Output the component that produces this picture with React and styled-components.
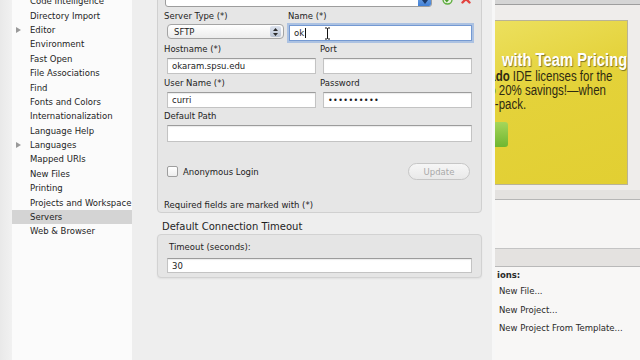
import React from "react";
import styled, { createGlobalStyle } from "styled-components";

const GlobalStyle = createGlobalStyle`
  html, body { margin: 0; padding: 0; }
  body {
    width: 640px;
    height: 360px;
    overflow: hidden;
    background: #eeeeee;
    font-family: "DejaVu Sans", "Liberation Sans", sans-serif;
    color: #222;
  }
`;

const Screen = styled.div`
  display: flex;
  width: 640px;
  height: 360px;
  overflow: hidden;
`;

/* ---------- preferences window ---------- */

const PrefsWindow = styled.div`
  display: flex;
  flex: none;
  width: 495px;
  height: 360px;
  background: #eeeeee;
  border-right: 3px solid #f7f7f7;
  box-sizing: border-box;
`;

const EdgeStrip = styled.div`
  flex: none;
  width: 12px;
  background: linear-gradient(to right, #e9e9e9, #f1f1f1);
`;

const Sidebar = styled.div`
  flex: none;
  width: 120px;
  background: #fbfbfb;
  overflow: hidden;
`;

const CategoryList = styled.ul`
  list-style: none;
  margin: -6px 0 0;
  padding: 0;
`;

const Category = styled.li`
  display: flex;
  align-items: center;
  height: 14.4px;
  font-size: 8.5px;
  color: #1e1e1e;
  background: ${({ $selected }) => ($selected ? "#d4d4d4" : "transparent")};
  white-space: nowrap;
`;

const Toggle = styled.span`
  flex: none;
  width: 18px;
  display: flex;
  align-items: center;
  padding-left: 4px;
  box-sizing: border-box;
  &::before {
    content: "";
    display: ${({ $open }) => ($open ? "block" : "none")};
    border-left: 5px solid #9a9a9a;
    border-top: 3.5px solid transparent;
    border-bottom: 3.5px solid transparent;
  }
`;

const Pane = styled.div`
  flex: 1;
  display: flex;
  flex-direction: column;
  padding-left: 25px;
  overflow: hidden;
`;

const GroupBox = styled.div`
  width: 325px;
  box-sizing: border-box;
  margin-top: -20px;
  padding: 10px 9px 1px 6px;
  background: #e6e6e6;
  border: 1px solid #d0d0d0;
  border-radius: 4px;
  display: flex;
  flex-direction: column;
`;

const TopRow = styled.div`
  display: flex;
  align-items: center;
  height: 16px;
`;

const Combo = styled.div`
  display: flex;
  align-items: stretch;
  width: 267px;
  height: 16px;
  margin-left: 1px;
  box-sizing: border-box;
  background: #fff;
  border: 1px solid #9d9d9d;
  border-radius: 3px;
  overflow: hidden;
`;

const ComboText = styled.span`
  flex: 1;
  padding-left: 6px;
  font-size: 8.5px;
  line-height: 8px;
`;

const ComboArrow = styled.span`
  flex: none;
  width: 13px;
  display: flex;
  align-items: flex-end;
  justify-content: center;
  padding-bottom: 2px;
  background: linear-gradient(#8db6ea, #3f7fd6);
`;

const IconSlot = styled.span`
  display: flex;
  margin-left: ${({ $gap }) => $gap}px;
`;

const Row = styled.div`
  display: flex;
  margin-top: ${({ $top }) => $top}px;
`;

const Cell = styled.div`
  display: flex;
  flex-direction: column;
  width: ${({ $w }) => $w}px;
  flex: none;
`;

const Label = styled.label`
  height: 12px;
  line-height: 12px;
  font-size: 8.5px;
  color: #242424;
  white-space: nowrap;
  margin-left: ${({ $indent }) => $indent || 0}px;
`;

const Input = styled.div`
  display: flex;
  align-items: center;
  position: relative;
  width: ${({ $w }) => $w}px;
  height: ${({ $h }) => $h || 16}px;
  margin-top: ${({ $top }) => ($top === undefined ? 3 : $top)}px;
  margin-left: ${({ $indent }) => ($indent === undefined ? 3 : $indent)}px;
  box-sizing: border-box;
  padding-left: 4px;
  background: #fff;
  border: 1px solid ${({ $focus }) => ($focus ? "#7499d2" : "#c3c3c3")};
  border-top-color: ${({ $focus }) => ($focus ? "#7499d2" : "#9c9c9c")};
  box-shadow: ${({ $focus }) =>
    $focus ? "0 0 0 2px rgba(124,164,222,0.55)" : "inset 0 1px 1px rgba(0,0,0,0.08)"};
  font-size: 8.5px;
  color: #1c1c1c;
`;

const Caret = styled.span`
  width: 1px;
  height: 10px;
  background: #111;
  margin-left: 1px;
`;

const Dots = styled.span`
  font-size: 8px;
  letter-spacing: 0.4px;
`;

const IBeam = styled.svg`
  position: absolute;
  left: 34px;
  top: 1px;
`;

const Popup = styled.div`
  display: flex;
  align-items: center;
  justify-content: space-between;
  width: 117px;
  height: 15px;
  margin: 2px 0 0 3px;
  box-sizing: border-box;
  padding: 0 2px 0 6px;
  background: linear-gradient(#ffffff, #ececec);
  border: 1px solid #a4a4a4;
  border-radius: 4px;
  font-size: 8.5px;
  color: #1c1c1c;
`;

const Stepper = styled.span`
  display: flex;
  align-items: center;
  justify-content: center;
  width: 11px;
  height: 11px;
  border-radius: 2px;
  background: linear-gradient(#dde3ee, #b9c3d3);
`;

const OptionRow = styled.div`
  display: flex;
  align-items: center;
  height: 17px;
  margin-top: 21px;
`;

const Checkbox = styled.span`
  width: 11px;
  height: 11px;
  margin-left: 3px;
  box-sizing: border-box;
  border: 1px solid #9e9e9e;
  border-radius: 2px;
  background: linear-gradient(#ffffff, #eeeeee);
`;

const CheckLabel = styled.span`
  margin-left: 5px;
  font-size: 8.5px;
  color: #222;
`;

const Button = styled.span`
  display: flex;
  align-items: center;
  justify-content: center;
  width: 62px;
  height: 17px;
  margin-left: auto;
  margin-right: 2px;
  box-sizing: border-box;
  border: 1px solid #c6c6c6;
  border-radius: 9px;
  background: linear-gradient(#f6f6f6, #e9e9e9);
  font-size: 8.5px;
  color: #a9a9a9;
`;

const Note = styled.div`
  height: 12px;
  line-height: 12px;
  margin-top: 19px;
  font-size: 8.5px;
  color: #222;
`;

const SectionTitle = styled.div`
  height: 12px;
  line-height: 12px;
  margin: 8px 0 0 5px;
  font-size: 10px;
  color: #1e1e1e;
`;

const TimeoutBox = styled.div`
  width: 325px;
  box-sizing: border-box;
  margin-top: 1px;
  padding: 6px 9px 4px 6px;
  background: #e5e5e5;
  border: 1px solid #d2d2d2;
  border-radius: 4px;
  box-shadow: 0 1px 2px rgba(0, 0, 0, 0.06);
  display: flex;
  flex-direction: column;
`;

/* ---------- window behind ---------- */

const BackWindow = styled.div`
  flex: 1;
  display: flex;
  flex-direction: column;
  background: #efedeb;
  overflow: hidden;
`;

const TitleStrip = styled.div`
  height: 4px;
  background: #d5d5d5;
  border-bottom: 1px solid #9e9e9e;
`;

const Banner = styled.div`
  height: 165px;
  margin: 15px 12px 5px 0;
  box-sizing: border-box;
  border: 1px solid #b9b396;
  border-left: none;
  background: linear-gradient(160deg, #ece05e 0%, #e4d23a 40%, #e2cf32 100%);
  overflow: hidden;
`;

/* the ad copy is set in a condensed face: squeeze Liberation Sans */
const BannerCopy = styled.div`
  font-family: "Liberation Sans", Arial, sans-serif;
  transform: scaleX(0.82);
  transform-origin: 0 0;
`;

const Headline = styled.div`
  margin: 30px 0 0 8.5px;
  height: 18px;
  line-height: 18px;
  font-size: 18px;
  font-weight: bold;
  color: #fff;
  white-space: nowrap;
  text-shadow: 1px 1px 1px rgba(0, 0, 0, 0.45);
`;

const BodyLine = styled.div`
  height: 14px;
  line-height: 14px;
  font-size: 14px;
  color: #2e2a12;
  white-space: nowrap;
  margin-left: ${({ $shift }) => $shift}px;
  b { font-weight: bold; }
`;

const GreenButton = styled.div`
  width: 13px;
  height: 25px;
  margin-top: 11px;
  border-radius: 0 3px 3px 0;
  background: linear-gradient(#a6d65a, #6fb630);
`;

const Band = styled.div`
  height: ${({ $h }) => $h}px;
  flex: none;
  background: #e4e2e0;
`;

const Well = styled.div`
  height: 48px;
  flex: none;
  background: #f6f5f4;
  border-top: 1px solid #b6b6b6;
  border-bottom: 1px solid #c4c4c4;
`;

const Actions = styled.div`
  flex: 1;
  background: #f8f7f6;
  border-top: 1px solid #b9b9b9;
  padding-top: 1px;
  font-size: 8.5px;
  color: #2a2a2a;
`;

const ActionsTitle = styled.div`
  height: 14px;
  line-height: 14px;
  font-weight: bold;
  margin-left: 2px;
`;

const ActionLink = styled.div`
  height: 18.5px;
  line-height: 18.5px;
  margin-left: 4px;
  white-space: nowrap;
`;

const categories = [
  "Code Intelligence",
  "Directory Import",
  "Editor",
  "Environment",
  "Fast Open",
  "File Associations",
  "Find",
  "Fonts and Colors",
  "Internationalization",
  "Language Help",
  "Languages",
  "Mapped URIs",
  "New Files",
  "Printing",
  "Projects and Workspace",
  "Servers",
  "Web & Browser",
];
const expandable = ["Editor", "Languages"];

const App = () => {
  return (
    <Screen>
      <GlobalStyle />
      <PrefsWindow>
        <EdgeStrip />
        <Sidebar>
          <CategoryList>
            {categories.map((c) => (
              <Category key={c} $selected={c === "Servers"}>
                <Toggle $open={expandable.includes(c)} />
                {c}
              </Category>
            ))}
          </CategoryList>
        </Sidebar>
        <Pane>
          <GroupBox>
            <TopRow>
              <Combo>
                <ComboText>ok</ComboText>
                <ComboArrow>
                  <svg width="6" height="4" viewBox="0 0 6 4">
                    <path d="M0 0h6L3 4z" fill="#1b3866" />
                  </svg>
                </ComboArrow>
              </Combo>
              <IconSlot $gap={10}>
                <svg width="11" height="11" viewBox="0 0 11 11">
                  <circle cx="5.5" cy="5.5" r="4.5" fill="#e9f3e2" stroke="#5fae3f" strokeWidth="1.4" />
                  <path d="M3.2 5.6l1.6 1.7 3-3.4" fill="none" stroke="#4a9c2c" strokeWidth="1.5" />
                </svg>
              </IconSlot>
              <IconSlot $gap={8}>
                <svg width="10" height="10" viewBox="0 0 10 10">
                  <path d="M1.5 1.5l7 7M8.5 1.5l-7 7" stroke="#e2433f" strokeWidth="2.4" strokeLinecap="round" />
                </svg>
              </IconSlot>
            </TopRow>

            <Row $top={3}>
              <Cell $w={124}>
                <Label>Server Type (*)</Label>
                <Popup>
                  SFTP
                  <Stepper>
                    <svg width="5" height="8" viewBox="0 0 5 8">
                      <path d="M2.5 0L5 3H0zM2.5 8L0 5h5z" fill="#2b2b2b" />
                    </svg>
                  </Stepper>
                </Popup>
              </Cell>
              <Cell $w={184}>
                <Label>Name (*)</Label>
                <Input $w={183} $indent={1} $focus>
                  ok
                  <Caret />
                  <IBeam width="7" height="13" viewBox="0 0 7 13">
                    <path d="M1 1h2l.5.5.5-.5h2M3.5 1.5v10M1 12h2l.5-.5.5.5h2" fill="none" stroke="#fff" strokeWidth="2.2" />
                    <path d="M1 1h2l.5.5.5-.5h2M3.5 1.5v10M1 12h2l.5-.5.5.5h2" fill="none" stroke="#111" strokeWidth="1" />
                  </IBeam>
                </Input>
              </Cell>
            </Row>

            <Row $top={2}>
              <Cell $w={156}>
                <Label>Hostname (*)</Label>
                <Input $w={149}>okaram.spsu.edu</Input>
              </Cell>
              <Cell $w={152}>
                <Label>Port</Label>
                <Input $w={149} />
              </Cell>
            </Row>

            <Row $top={3}>
              <Cell $w={156}>
                <Label>User Name (*)</Label>
                <Input $w={149}>curri</Input>
              </Cell>
              <Cell $w={152}>
                <Label>Password</Label>
                <Input $w={149}>
                  <Dots>••••••••••</Dots>
                </Input>
              </Cell>
            </Row>

            <Row $top={2}>
              <Cell $w={308}>
                <Label>Default Path</Label>
                <Input $w={305} $h={17} />
              </Cell>
            </Row>

            <OptionRow>
              <Checkbox />
              <CheckLabel>Anonymous Login</CheckLabel>
              <Button>Update</Button>
            </OptionRow>

            <Note>Required fields are marked with (*)</Note>
          </GroupBox>

          <SectionTitle>Default Connection Timeout</SectionTitle>
          <TimeoutBox>
            <Label $indent={5}>Timeout (seconds):</Label>
            <Input $w={305} $h={15} $top={5}>30</Input>
          </TimeoutBox>
        </Pane>
      </PrefsWindow>

      <BackWindow>
        <TitleStrip />
        <Banner>
          <BannerCopy>
            <Headline>with Team Pricing</Headline>
            <BodyLine $shift={-7}>
              <b>ado</b> IDE licenses for the
            </BodyLine>
            <BodyLine $shift={-11}>to 20% savings!—when</BodyLine>
            <BodyLine $shift={-8}>5-pack.</BodyLine>
          </BannerCopy>
          <GreenButton />
        </Banner>
        <Band $h={9} />
        <Well />
        <Band $h={17} />
        <Actions>
          <ActionsTitle>ions:</ActionsTitle>
          <ActionLink>New File...</ActionLink>
          <ActionLink>New Project...</ActionLink>
          <ActionLink>New Project From Template...</ActionLink>
        </Actions>
      </BackWindow>
    </Screen>
  );
};

export default App;
